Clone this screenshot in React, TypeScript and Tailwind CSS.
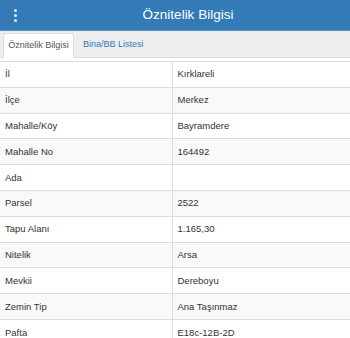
const rows: [string, string][] = [
  ["İl", "Kırklareli"],
  ["İlçe", "Merkez"],
  ["Mahalle/Köy", "Bayramdere"],
  ["Mahalle No", "164492"],
  ["Ada", ""],
  ["Parsel", "2522"],
  ["Tapu Alanı", "1.165,30"],
  ["Nitelik", "Arsa"],
  ["Mevkii", "Dereboyu"],
  ["Zemin Tip", "Ana Taşınmaz"],
  ["Pafta", "E18c-12B-2D"],
];

export default function App() {
  return (
    <div className="w-[350px] h-[338px] overflow-hidden bg-white font-['Liberation_Sans',Arial,sans-serif] text-[#333]">
      <div className="flex items-center h-[31px] bg-[#337ab7] border-b border-[#5a93c6]">
        <div className="w-[26px] h-full flex flex-col items-center justify-center gap-[2px] pl-[4px]">
          <span className="block w-[3px] h-[3px] rounded-full bg-[#e4eef8]" />
          <span className="block w-[3px] h-[3px] rounded-full bg-[#e4eef8]" />
          <span className="block w-[3px] h-[3px] rounded-full bg-[#e4eef8]" />
        </div>
        <div className="flex-1 text-center text-white text-[13.5px] leading-none">
          Öznitelik Bilgisi
        </div>
      </div>
      <div className="flex items-end h-[27px] bg-[#eeeeee] px-[3px] border-b border-[#dddddd]">
        <div className="w-[71px] h-[25px] -mb-px flex items-center justify-center bg-white border border-[#dddddd] border-b-white rounded-t-[3px] text-[9px] text-[#555]">
          Öznitelik Bilgisi
        </div>
        <div className="h-[25px] flex items-center px-[9px] text-[9px] text-[#337ab7]">
          Bina/BB Listesi
        </div>
      </div>
      <table className="mt-[3px] w-full border-collapse text-[9.5px]">
        <tbody>
          {rows.map(([k, v], i) => (
            <tr
              key={k}
              className={`h-[25.8px] border-t border-[#dddddd] ${i % 2 === 1 ? "bg-[#f9f9f9]" : "bg-white"}`}
            >
              <td className="w-[172px] p-0 px-[5px] leading-[12px] border-r border-[#dddddd] align-middle">{k}</td>
              <td className="p-0 px-[5px] leading-[12px] align-middle">{v}</td>
            </tr>
          ))}
        </tbody>
      </table>
    </div>
  );
}
